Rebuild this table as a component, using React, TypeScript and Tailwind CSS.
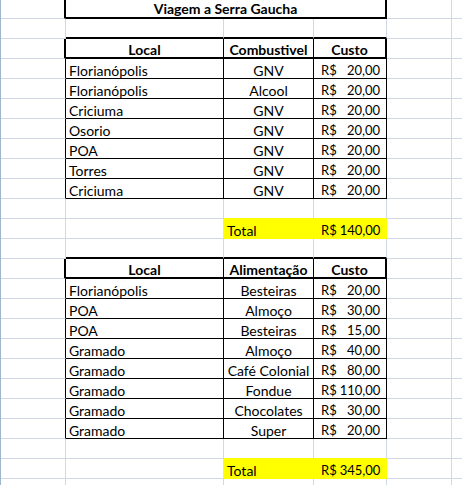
import React from "react";

const W = ["w-[65px]", "w-[158px]", "w-[90px]", "w-[73px]", "w-[65px]", "flex-1"];

const RC: Record<string, string> = {
  g: "border-r border-r-[#d0d7e5]",
  k: "border-r border-r-black",
  K: "border-r-2 border-r-black",
  y: "border-r border-r-[#ffff00]",
  n: "border-r-0",
};
const BC: Record<string, string> = {
  g: "border-b border-b-[#d0d7e5]",
  k: "border-b border-b-black",
  K: "border-b-2 border-b-black",
  y: "border-b border-b-[#ffff00]",
};

type CellSpec = {
  w: string;
  r: string;
  b: string;
  bg?: string;
  content?: React.ReactNode;
  cls?: string;
};

function Cell({ w, r, b, bg, content, cls }: CellSpec) {
  return (
    <div
      className={`shrink-0 h-full flex items-center overflow-hidden whitespace-nowrap ${w} ${RC[r]} ${BC[b]} ${bg ?? ""} ${cls ?? ""}`}
    >
      {content}
    </div>
  );
}

function Row({ h = "h-[20px]", cells }: { h?: string; cells: CellSpec[] }) {
  return <div className={`flex ${h}`}>{cells.map((c, i) => <Cell key={i} {...c} />)}</div>;
}

const Money = ({ v }: { v: string }) => (
  <div className="flex w-full justify-between gap-[3px] pl-[7px] pr-[6px] pt-[4px] text-[13px]">
    <span>R$</span>
    <span>{v}</span>
  </div>
);

const Left = ({ t }: { t: string }) => <span className="pl-[3px] pt-[3px]">{t}</span>;
const Center = ({ t, bold }: { t: string; bold?: boolean }) => (
  <span className={`w-full text-center pt-[3px] ${bold ? "font-bold" : ""}`}>{t}</span>
);

function blank(bB = "g", bC = "g", bD = "g"): CellSpec[] {
  return [
    { w: W[0], r: "g", b: "g" },
    { w: W[1], r: "g", b: bB },
    { w: W[2], r: "g", b: bC },
    { w: W[3], r: "g", b: bD },
    { w: W[4], r: "g", b: "g" },
    { w: W[5], r: "n", b: "g" },
  ];
}

function header(a: string, b: string, c: string): CellSpec[] {
  return [
    { w: W[0], r: "K", b: "g" },
    { w: W[1], r: "k", b: "K", content: <Center t={a} bold /> },
    { w: W[2], r: "k", b: "K", content: <Center t={b} bold /> },
    { w: W[3], r: "K", b: "K", content: <Center t={c} bold /> },
    { w: W[4], r: "g", b: "g" },
    { w: W[5], r: "n", b: "g" },
  ];
}

function data(a: string, b: string, c: string): CellSpec[] {
  return [
    { w: W[0], r: "k", b: "g" },
    { w: W[1], r: "k", b: "k", content: <Left t={a} /> },
    { w: W[2], r: "k", b: "k", content: <Center t={b} /> },
    { w: W[3], r: "k", b: "k", content: <Money v={c} /> },
    { w: W[4], r: "g", b: "g" },
    { w: W[5], r: "n", b: "g" },
  ];
}

function total(v: string): CellSpec[] {
  return [
    { w: W[0], r: "g", b: "g" },
    { w: W[1], r: "y", b: "g" },
    { w: W[2], r: "n", b: "y", bg: "bg-[#ffff00]", content: <Left t="Total" /> },
    { w: W[3], r: "y", b: "y", bg: "bg-[#ffff00]", content: <Money v={v} /> },
    { w: W[4], r: "g", b: "g" },
    { w: W[5], r: "n", b: "g" },
  ];
}

const t1 = [
  ["Florianópolis", "GNV", "20,00"],
  ["Florianópolis", "Alcool", "20,00"],
  ["Criciuma", "GNV", "20,00"],
  ["Osorio", "GNV", "20,00"],
  ["POA", "GNV", "20,00"],
  ["Torres", "GNV", "20,00"],
  ["Criciuma", "GNV", "20,00"],
];

const t2 = [
  ["Florianópolis", "Besteiras", "20,00"],
  ["POA", "Almoço", "30,00"],
  ["POA", "Besteiras", "15,00"],
  ["Gramado", "Almoço", "40,00"],
  ["Gramado", "Café Colonial", "80,00"],
  ["Gramado", "Fondue", "110,00"],
  ["Gramado", "Chocolates", "30,00"],
  ["Gramado", "Super", "20,00"],
];

export default function App() {
  const titleRow: CellSpec[] = [
    { w: W[0], r: "K", b: "g" },
    {
      w: "w-[321px]",
      r: "K",
      b: "K",
      content: <span className="w-full text-center font-bold">Viagem a Serra Gaucha</span>,
    },
    { w: W[4], r: "g", b: "g" },
    { w: W[5], r: "n", b: "g" },
  ];
  return (
    <div
      className="w-[462px] h-[485px] overflow-hidden bg-white text-black text-[14px] border-l border-l-[#9eb6ce]"
      style={{ fontFamily: "Lato, 'Open Sans', sans-serif" }}
    >
      <Row h="h-[19px]" cells={titleRow} />
      <Row cells={blank("K", "K", "K")} />
      <Row cells={header("Local", "Combustivel", "Custo")} />
      {t1.map((r, i) => (
        <Row key={"a" + i} cells={data(r[0], r[1], r[2])} />
      ))}
      <Row cells={blank("g", "y", "y")} />
      <Row cells={total("140,00")} />
      <Row cells={blank("K", "K", "K")} />
      <Row cells={header("Local", "Alimentação", "Custo")} />
      {t2.map((r, i) => (
        <Row key={"b" + i} cells={data(r[0], r[1], r[2])} />
      ))}
      <Row cells={blank("g", "y", "y")} />
      <Row cells={total("345,00")} />
      <Row cells={blank()} />
    </div>
  );
}
